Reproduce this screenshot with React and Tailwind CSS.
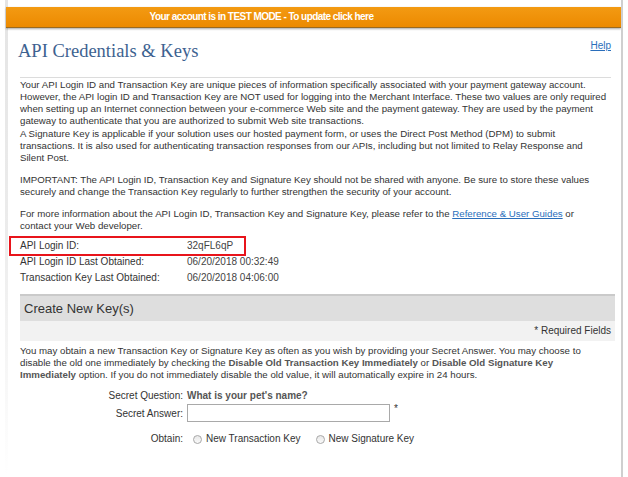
import React, { useState } from 'react';

const Line = ({ children }) => <span className="block whitespace-nowrap">{children}</span>;

const InfoRow = ({ label, value }) => (
  <div className="flex h-[16px] items-center">
    <span className="w-[167px]">{label}</span>
    <span className="text-[#444]">{value}</span>
  </div>
);

const Radio = ({ label, checked, onChange }) => (
  <label className="flex items-center gap-[4px] cursor-pointer">
    <span
      onClick={onChange}
      className={`w-[9px] h-[9px] rounded-full border border-[#a8a8a8] bg-gradient-to-b from-[#e8e8e8] to-[#fafafa] ${checked ? 'ring-2 ring-inset ring-[#555]' : ''}`}
    />
    <span>{label}</span>
  </label>
);

const App = () => {
  const [answer, setAnswer] = useState('');
  const [obtain, setObtain] = useState('');

  return (
    <div
      className="w-[628px] h-[477px] overflow-hidden bg-white text-[#333] text-[10px] leading-[12px]"
      style={{ fontFamily: '"Liberation Sans", Arial, sans-serif' }}
    >
      <div className="flex h-full ml-[5px] mr-[5px]">
        {/* left shadow strip */}
        <div className="w-[3px] h-full bg-gradient-to-b from-[#e4e4e4] via-[#ececec] to-white" />

        <div className="flex-1 flex flex-col min-w-0">
          {/* test mode banner */}
          <div className="mt-[7px] -ml-[2px] h-[21px] flex items-center justify-center pr-[104px] bg-gradient-to-b from-[#f39a12] to-[#ec8a00] border-b border-[#9a6a20] shadow-[0_1px_2px_rgba(0,0,0,0.35)]">
            <span className="text-white font-bold text-[10px] tracking-[-0.55px]">
              Your account is in TEST MODE - To update click here
            </span>
          </div>

          <div className="pl-[12px] pr-[10px]">
            {/* title */}
            <div className="flex items-start justify-between pt-[11px] pb-[14px] border-b border-[#dcdcdc]">
              <h1
                className="-ml-[2px] text-[18.5px] leading-[24px] text-[#3d6290]"
                style={{ fontFamily: '"Liberation Serif", "Times New Roman", serif' }}
              >
                API Credentials &amp; Keys
              </h1>
              <a href="#" className="mt-[1px] text-[10px] text-[#2a6ebb] underline">Help</a>
            </div>

            <div className="text-[9.7px]">
              {/* intro */}
              <p className="pt-[1px]">
                <Line>Your API Login ID and Transaction Key are unique pieces of information specifically associated with your payment gateway account.</Line>
                <Line>However, the API login ID and Transaction Key are NOT used for logging into the Merchant Interface. These two values are only required</Line>
                <Line>when setting up an Internet connection between your e-commerce Web site and the payment gateway. They are used by the payment</Line>
                <Line>gateway to authenticate that you are authorized to submit Web site transactions.</Line>
              </p>
              <p className="mt-[1px]">
                <Line>A Signature Key is applicable if your solution uses our hosted payment form, or uses the Direct Post Method (DPM) to submit</Line>
                <Line>transactions. It is also used for authenticating transaction responses from our APIs, including but not limited to Relay Response and</Line>
                <Line>Silent Post.</Line>
              </p>
              <p className="mt-[10px]">
                <Line>IMPORTANT: The API Login ID, Transaction Key and Signature Key should not be shared with anyone. Be sure to store these values</Line>
                <Line>securely and change the Transaction Key regularly to further strengthen the security of your account.</Line>
              </p>
              <p className="mt-[10px]">
                <Line>
                  For more information about the API Login ID, Transaction Key and Signature Key, please refer to the{' '}
                  <a href="#" className="text-[#2a6ebb] underline">Reference &amp; User Guides</a> or
                </Line>
                <Line>contact your Web developer.</Line>
              </p>
            </div>

            {/* credential rows */}
            <div className="relative mt-[6px]">
              <div className="absolute -left-[11px] -top-[2px] w-[237px] h-[20px] border-2 border-[#e8141b] pointer-events-none" />
              <InfoRow label="API Login ID:" value="32qFL6qP" />
              <InfoRow label="API Login ID Last Obtained:" value="06/20/2018 00:32:49" />
              <InfoRow label="Transaction Key Last Obtained:" value="06/20/2018 04:06:00" />
            </div>

            {/* create new key section */}
            <div className="mt-[8px] -mr-[4px]">
              <div className="h-[27px] flex items-center pl-[4px] bg-[#dedede] border-t-2 border-[#cacaca] text-[13px] text-[#333]">
                Create New Key(s)
              </div>
              <div className="h-[20px] flex items-center justify-end pr-[4px] bg-[#f2f2f2]">
                * Required Fields
              </div>
            </div>

            <p className="mt-[4px] text-[9.7px]">
              <Line>You may obtain a new Transaction Key or Signature Key as often as you wish by providing your Secret Answer. You may choose to</Line>
              <Line>
                disable the old one immediately by checking the <b className="text-[#555]">Disable Old Transaction Key Immediately</b> or{' '}
                <b className="text-[#555]">Disable Old Signature Key</b>
              </Line>
              <Line>
                <b className="text-[#555]">Immediately</b> option. If you do not immediately disable the old value, it will automatically expire in 24 hours.
              </Line>
            </p>

            {/* form */}
            <div className="mt-[7px] grid grid-cols-[163px_1fr] gap-x-[4px] items-center">
              <span className="text-right h-[15px] leading-[15px]">Secret Question:</span>
              <span className="font-bold text-[#555] h-[15px] leading-[15px]">What is your pet's name?</span>

              <span className="text-right mt-[2px]">Secret Answer:</span>
              <div className="flex items-start gap-[4px] mt-[1px]">
                <input
                  value={answer}
                  onChange={(e) => setAnswer(e.target.value)}
                  className="w-[203px] h-[18px] border border-[#a9a9a9] px-[2px] text-[10px] outline-none"
                />
                <span className="leading-[10px]">*</span>
              </div>

              <span className="text-right mt-[11px]">Obtain:</span>
              <div className="flex items-center gap-[15px] mt-[11px] pl-[6px]">
                <Radio label="New Transaction Key" checked={obtain === 'tx'} onChange={() => setObtain('tx')} />
                <Radio label="New Signature Key" checked={obtain === 'sig'} onChange={() => setObtain('sig')} />
              </div>
            </div>
          </div>
        </div>

        {/* right border */}
        <div className="w-[2px] h-full bg-[#cfcfcf]" />
      </div>
    </div>
  );
};

export default App;
